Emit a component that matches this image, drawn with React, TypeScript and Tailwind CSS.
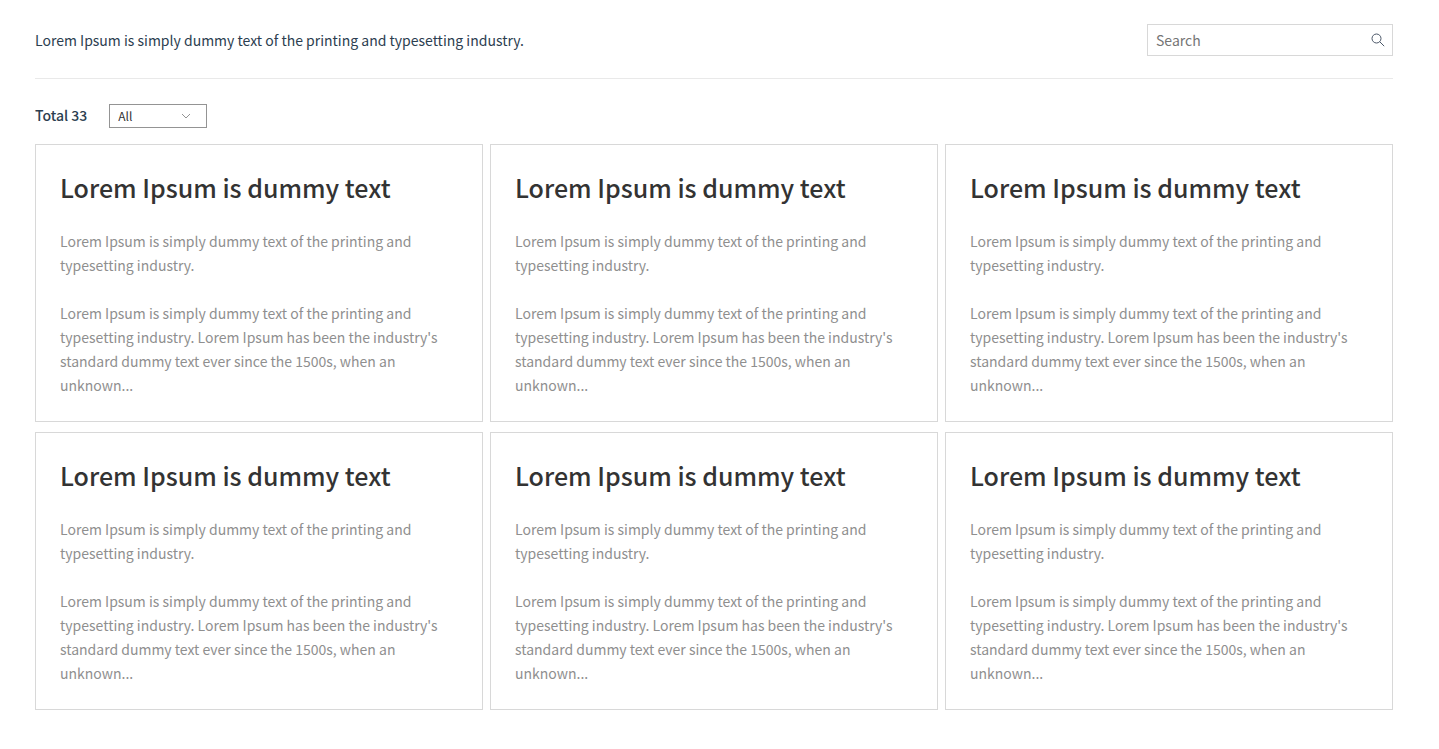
const cards = Array.from({ length: 6 }, (_, id) => ({
  id,
  title: "Lorem Ipsum is dummy text",
  summary: "Lorem Ipsum is simply dummy text of the printing and typesetting industry.",
  body: "Lorem Ipsum is simply dummy text of the printing and typesetting industry. Lorem Ipsum has been the industry's standard dummy text ever since the 1500s, when an unknown...",
}));

function SearchIcon() {
  return (
    <svg className="size-4" viewBox="0 0 16 16" fill="none" stroke="#4b5768" strokeWidth="1" aria-hidden="true">
      <circle cx="7.5" cy="6.5" r="4.5" />
      <path d="M10.7 9.7 L15.2 14.2" />
    </svg>
  );
}

function Header() {
  return (
    <header className="flex items-center justify-between border-b border-[#e9e9e9] pb-[22px]">
      <p className="text-sm leading-6 text-[#2c3e50]">
        Lorem Ipsum is simply dummy text of the printing and typesetting industry.
      </p>
      <form role="search" className="flex h-8 w-[246px] items-center border border-[#d8d8d8] pl-2 pr-[7px]" onSubmit={(e) => e.preventDefault()}>
        <input
          type="text"
          aria-label="Search"
          placeholder="Search"
          className="min-w-0 flex-1 bg-transparent text-sm leading-6 text-[#2c3e50] outline-none placeholder:text-[#757575]"
        />
        <button type="submit" aria-label="Submit search">
          <SearchIcon />
        </button>
      </form>
    </header>
  );
}

function Toolbar() {
  return (
    <div className="flex items-start gap-[22px] pt-[25px] pb-4">
      <p className="text-sm leading-[22px] font-medium text-[#2c3e50]">Total 33</p>
      <div className="grid w-[98px] items-center">
        <select aria-label="Filter" className="col-start-1 row-start-1 h-6 w-full appearance-none rounded-none border border-[#949494] bg-white px-2 text-xs leading-5 text-[#333]">
          <option>All</option>
        </select>
        <svg className="pointer-events-none col-start-1 row-start-1 mr-4 h-2 w-2.5 justify-self-end" viewBox="0 0 10 8" fill="none" stroke="#949494" aria-hidden="true">
          <path d="M1 2 L5 6 L9 2" />
        </svg>
      </div>
    </div>
  );
}

export default function App() {
  return (
    <main className="min-h-screen bg-white pt-6 pr-[46px] pb-10 pl-[35px] font-['Noto_Sans_CJK_KR',sans-serif]">
      <Header />
      <Toolbar />
      <section className="grid grid-cols-3 gap-x-[7px] gap-y-2.5">
        {cards.map((card) => (
          <article key={card.id} className="border border-[#d8d8d8] p-6">
            <h2 className="text-[25px] leading-9 font-medium text-[#333]">{card.title}</h2>
            <div className="mt-6 space-y-6 text-sm leading-6 text-[#8f8f8f]">
              <p>{card.summary}</p>
              <p>{card.body}</p>
            </div>
          </article>
        ))}
      </section>
    </main>
  );
}
